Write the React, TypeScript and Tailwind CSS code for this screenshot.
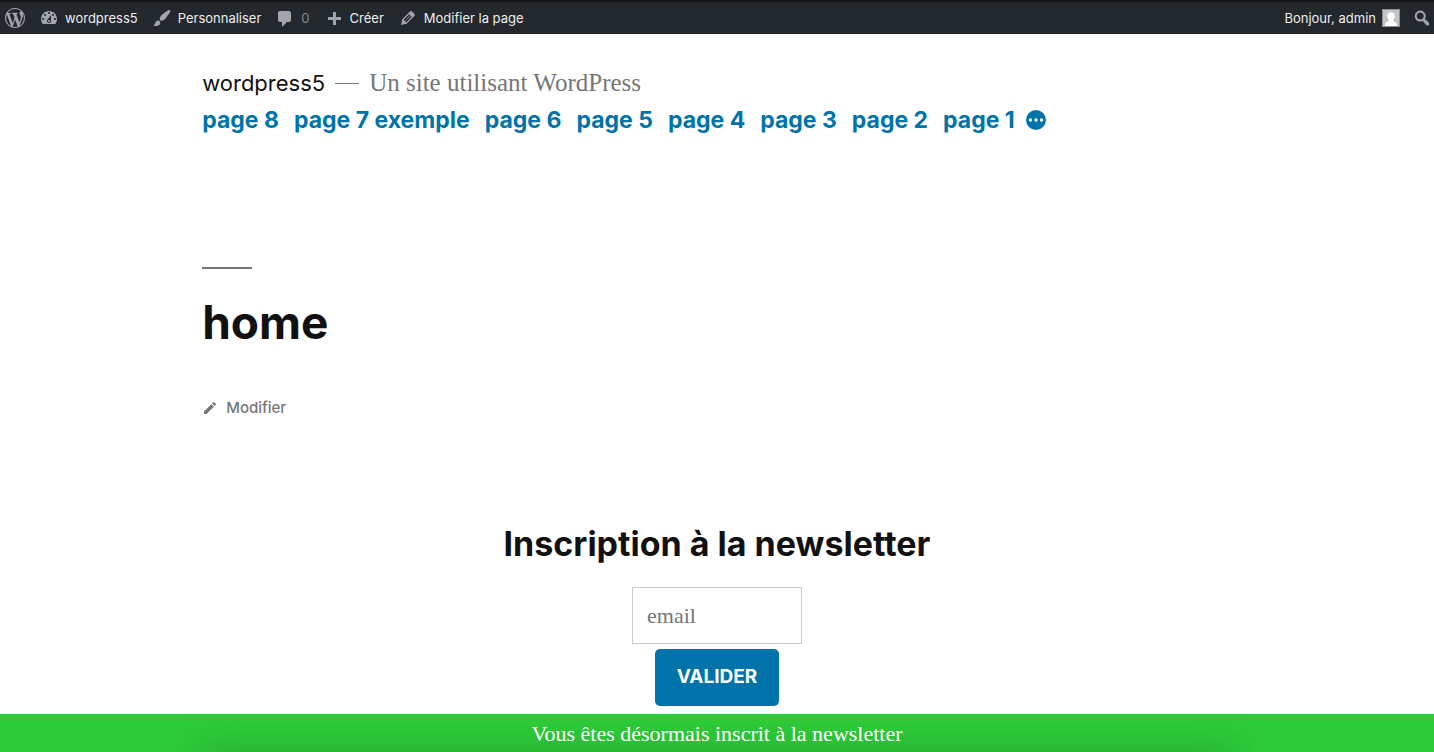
import type { ReactNode } from "react";

const paths = {
  wordpress:
    "M20 10c0-5.51-4.49-10-10-10C4.48 0 0 4.49 0 10c0 5.52 4.48 10 10 10 5.51 0 10-4.48 10-10zM7.78 15.37L4.37 6.22c.55-.02 1.17-.08 1.17-.08.5-.06.44-1.13-.06-1.11 0 0-1.45.11-2.37.11-.18 0-.37 0-.58-.01C4.12 2.69 6.87 1.11 10 1.11c2.33 0 4.45.87 6.05 2.34-.68-.11-1.65.39-1.65 1.58 0 .74.45 1.36.9 2.1.35.61.55 1.36.55 2.46 0 1.49-1.4 5-1.4 5l-3.03-8.37c.54-.02.82-.17.82-.17.5-.05.44-1.25-.06-1.22 0 0-1.44.12-2.38.12-.87 0-2.33-.12-2.33-.12-.5-.03-.56 1.2-.06 1.22l.92.08 1.26 3.41zM17.41 10c.24-.64.74-1.87.43-4.25.7 1.29 1.05 2.71 1.05 4.25 0 3.29-1.73 6.24-4.4 7.78.97-2.59 1.94-5.2 2.92-7.78zM6.1 18.09C3.12 16.65 1.11 13.53 1.11 10c0-1.3.23-2.48.72-3.59C3.25 10.3 4.67 14.2 6.1 18.09zm4.03-6.63l2.58 6.98c-.86.29-1.76.45-2.71.45-.79 0-1.57-.11-2.29-.33.81-2.38 1.62-4.74 2.42-7.1z",
  dashboard:
    "M3.76 16h12.48c1.1-1.37 1.76-3.11 1.76-5 0-4.42-3.58-8-8-8s-8 3.58-8 8c0 1.89.66 3.63 1.76 5zM10 4c.55 0 1 .45 1 1s-.45 1-1 1-1-.45-1-1 .45-1 1-1zM6 6c.55 0 1 .45 1 1s-.45 1-1 1-1-.45-1-1 .45-1 1-1zm8 0c.55 0 1 .45 1 1s-.45 1-1 1-1-.45-1-1 .45-1 1-1zm-5.37 5.55L12 7v6c0 1.1-.9 2-2 2s-2-.9-2-2c0-.57.24-1.08.63-1.45zM4 10c.55 0 1 .45 1 1s-.45 1-1 1-1-.45-1-1 .45-1 1-1zm12 0c.55 0 1 .45 1 1s-.45 1-1 1-1-.45-1-1 .45-1 1-1zm-5 3c0-.55-.45-1-1-1s-1 .45-1 1 .45 1 1 1 1-.45 1-1z",
  brush:
    "M18.33 3.57s.27-.8-.31-1.36c-.53-.52-1.22-.24-1.22-.24-.61.3-5.76 3.47-7.67 5.57-.86.96-2.06 3.79-1.09 4.82.92.98 3.96-.17 4.79-1 2.06-2.06 5.21-7.17 5.5-7.79zM1.4 17.65c2.37-1.56 1.46-3.41 3.23-4.64.93-.65 2.22-.62 3.08.29.63.67.8 2.57-.16 3.46-1.57 1.45-4 1.55-6.15.89z",
  comment: "M5 3h9c1.1 0 2 .9 2 2v7c0 1.1-.9 2-2 2h-2l-5 5v-5H5c-1.1 0-2-.9-2-2V5c0-1.1.9-2 2-2z",
  plus: "M17 9v3h-5v5H9v-5H4V9h5V4h3v5h5z",
  edit: "M13.89 3.39l2.71 2.72c.46.46.42 1.24.03 1.64l-8.01 8.02-5.56 1.16 1.16-5.58s7.6-7.63 7.99-8.03c.39-.39 1.22-.39 1.68.07zm-2.73 2.79l-5.59 5.61 1.11 1.11 5.54-5.65zm-2.97 8.23l5.58-5.6-1.07-1.08-5.59 5.6z",
  search:
    "M12.14 4.18c1.87 1.87 2.11 4.75.72 6.89.12.1.22.21.36.31.2.16.47.36.81.59.34.24.56.39.66.47.42.31.73.57.94.78.32.32.6.65.84 1 .25.35.44.69.59 1.04.14.35.21.68.18 1-.02.32-.14.59-.36.81s-.49.34-.81.36c-.31.02-.65-.04-.99-.19-.35-.14-.7-.34-1.04-.59-.35-.24-.68-.52-1-.84-.21-.21-.47-.52-.77-.93-.1-.13-.25-.35-.47-.66-.22-.32-.4-.57-.56-.78-.16-.2-.29-.35-.44-.5-2.07 1.09-4.69.76-6.44-.98-2.14-2.15-2.14-5.64 0-7.78 2.15-2.15 5.63-2.15 7.78 0zm-1.41 6.36c1.36-1.37 1.36-3.58 0-4.95-1.37-1.37-3.59-1.37-4.95 0-1.37 1.37-1.37 3.58 0 4.95 1.36 1.37 3.58 1.37 4.95 0z",
};

function Icon({ name }: { name: keyof typeof paths }) {
  return (
    <svg viewBox="0 0 20 20" className="size-5 shrink-0 fill-[#a0a5aa]" aria-hidden="true">
      <path d={paths[name]} />
    </svg>
  );
}

function BarLink({ icon, children }: { icon: keyof typeof paths; children: ReactNode }) {
  return (
    <a href="#" className="flex items-center gap-[6px]">
      <Icon name={icon} />
      <span className="pt-px">{children}</span>
    </a>
  );
}

function AdminBar() {
  return (
    <header className="flex h-[34px] items-center justify-between border-t-2 border-[#15181a] bg-[#23282d] pr-[2px] pl-[5px] font-['Inter',sans-serif] text-[13px] text-[#eeeeee]">
      <nav aria-label="Administration" className="flex items-center gap-[14px]">
        <a href="#" aria-label="WordPress">
          <Icon name="wordpress" />
        </a>
        <BarLink icon="dashboard">wordpress5</BarLink>
        <BarLink icon="brush">Personnaliser</BarLink>
        <BarLink icon="comment">
          <span className="text-[#82878c]">0</span>
        </BarLink>
        <BarLink icon="plus">Créer</BarLink>
        <BarLink icon="edit">Modifier la page</BarLink>
      </nav>
      <div className="flex items-center gap-3">
        <a href="#" className="flex items-center gap-[6px]">
          <span className="pt-px">Bonjour, admin</span>
          <svg viewBox="0 0 18 18" className="size-[18px]" aria-hidden="true">
            <rect width="18" height="18" fill="#8c8f94" />
            <rect x="1" y="1" width="16" height="16" fill="#c4c4c4" />
            <path
              d="M9 3.2c2.3 0 3.8 1.7 3.8 3.9 0 1.600-.7 3-1.700 3.800v1.100c2 .6 3.600 1.500 4.100 5H2.800c.5-3.500 2.100-4.400 4.100-5v-1.100C5.900 10.100 5.200 8.700 5.200 7.100c0-2.200 1.500-3.900 3.800-3.900z"
              fill="#ffffff"
            />
          </svg>
        </a>
        <button type="button" aria-label="Rechercher">
          <Icon name="search" />
        </button>
      </div>
    </header>
  );
}

const pages = ["page 8", "page 7 exemple", "page 6", "page 5", "page 4", "page 3", "page 2", "page 1"];

function SiteHeader() {
  return (
    <div>
      <div className="flex items-center leading-9">
        <a href="#" className="text-[22px] text-[#111111]">
          wordpress5
        </a>
        <span className="mx-[10px] h-px w-6 bg-[#767676]" />
        <p className="font-['Liberation_Serif',serif] text-[25px] text-[#767676]">Un site utilisant WordPress</p>
      </div>
      <nav
        aria-label="Menu principal"
        className="flex items-center gap-[15px] text-[23px] leading-[38px] font-bold text-[#0073aa]"
      >
        {pages.map((page) => (
          <a key={page} href="#">
            {page}
          </a>
        ))}
        <button type="button" aria-label="Plus" className="-ml-1">
          <svg viewBox="0 0 20 20" className="size-5" aria-hidden="true">
            <circle cx="10" cy="10" r="10" fill="#0073aa" />
            <circle cx="4.500" cy="10" r="1.700" fill="#ffffff" />
            <circle cx="10" cy="10" r="1.700" fill="#ffffff" />
            <circle cx="15.500" cy="10" r="1.700" fill="#ffffff" />
          </svg>
        </button>
      </nav>
    </div>
  );
}

function Newsletter() {
  return (
    <form className="flex flex-col items-center" onSubmit={(event) => event.preventDefault()}>
      <h2 className="text-[34px] leading-[44px] font-bold">Inscription à la newsletter</h2>
      <input
        type="email"
        aria-label="email"
        placeholder="email"
        className="mt-[21px] h-[57px] w-[170px] border border-[#cccccc] bg-white px-[14px] font-['Liberation_Serif',serif] text-[22px] placeholder:text-[#767676]"
      />
      <button
        type="submit"
        className="mt-[5px] h-[57px] rounded-[5px] bg-[#0073aa] px-[22px] text-[19px] font-bold text-white"
      >
        VALIDER
      </button>
    </form>
  );
}

export default function App() {
  return (
    <div className="flex min-h-screen flex-col bg-white font-['Inter',sans-serif] text-[#111111]">
      <AdminBar />
      <main className="grow pt-[31px]">
        <div className="mx-[14.1%]">
          <SiteHeader />
          <div className="mt-32 h-[2px] w-[50px] bg-[#767676]" />
          <h1 className="mt-[23px] text-[46px] leading-[60px] font-bold">home</h1>
          <a href="#" className="mt-11 flex items-center gap-2 text-[15px] leading-6 font-medium text-[#767676]">
            <svg viewBox="0 0 24 24" className="size-4 fill-current" aria-hidden="true">
              <path d="M3 17.250V21h3.750L17.810 9.940l-3.750-3.750L3 17.250zM20.710 7.040c.39-.39.39-1.020 0-1.410l-2.340-2.340c-.39-.39-1.020-.39-1.410 0l-1.830 1.830 3.750 3.750 1.830-1.830z" />
            </svg>
            Modifier
          </a>
        </div>
        <div className="mt-[102px] pb-2">
          <Newsletter />
        </div>
      </main>
      <div
        role="status"
        className="relative h-[38px] overflow-hidden bg-[#2ecc3a] text-center font-['Liberation_Serif',serif] text-[22px] leading-10 text-white"
      >
        <div className="absolute inset-x-[14%] top-full h-5 shadow-[0_0_36px_4px_rgba(20,90,25,0.3)]" />
        <p className="relative">Vous êtes désormais inscrit à la newsletter</p>
      </div>
    </div>
  );
}
